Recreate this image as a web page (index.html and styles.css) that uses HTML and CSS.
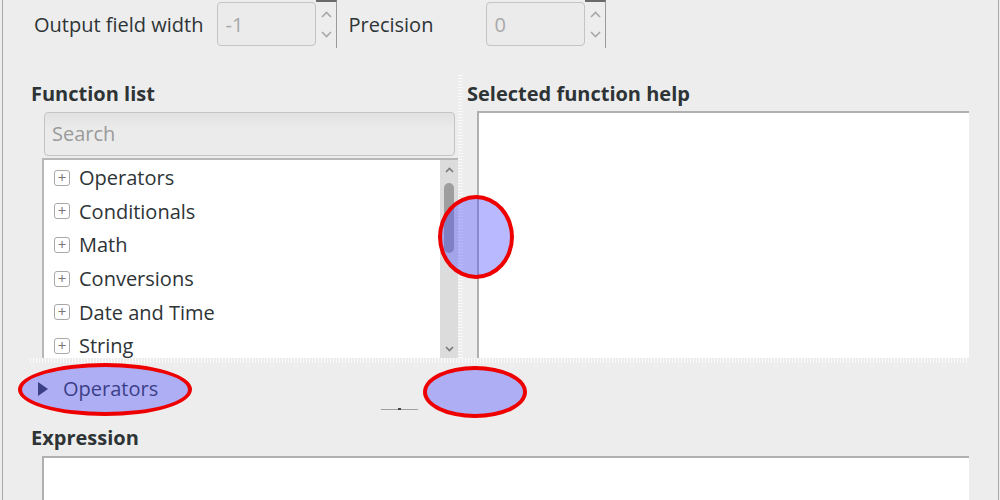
FILE: index.html
```html
<!DOCTYPE html>
<html lang="en">
<head>
    <meta charset="UTF-8">
    <title>Expression editor</title>
    <link rel="stylesheet" href="styles.css">
</head>
<body>
    <div class="window">
        <div class="format-row">
            <span class="label">Output field width</span>
            <div class="spinbox">
                <div class="spin-value">-1</div>
                <div class="spin-buttons">
                    <svg width="11" height="7" viewBox="0 0 11 7"><path d="M1 6 L5.5 1.5 L10 6" fill="none" stroke="#a8a8a8" stroke-width="1.6"/></svg>
                    <svg width="11" height="7" viewBox="0 0 11 7"><path d="M1 1 L5.5 5.5 L10 1" fill="none" stroke="#a8a8a8" stroke-width="1.6"/></svg>
                </div>
            </div>
            <span class="label precision">Precision</span>
            <div class="spinbox">
                <div class="spin-value">0</div>
                <div class="spin-buttons">
                    <svg width="11" height="7" viewBox="0 0 11 7"><path d="M1 6 L5.5 1.5 L10 6" fill="none" stroke="#a8a8a8" stroke-width="1.6"/></svg>
                    <svg width="11" height="7" viewBox="0 0 11 7"><path d="M1 1 L5.5 5.5 L10 1" fill="none" stroke="#a8a8a8" stroke-width="1.6"/></svg>
                </div>
            </div>
        </div>

        <div class="panes">
            <section class="list-pane">
                <h2>Function list</h2>
                <div class="search">Search</div>
                <div class="func-list">
                    <ul>
                        <li><span class="plus">+</span>Operators</li>
                        <li><span class="plus">+</span>Conditionals</li>
                        <li><span class="plus">+</span>Math</li>
                        <li><span class="plus">+</span>Conversions</li>
                        <li><span class="plus">+</span>Date and Time</li>
                        <li><span class="plus">+</span>String</li>
                    </ul>
                    <div class="scrollbar">
                        <svg width="9" height="6" viewBox="0 0 9 6"><path d="M1 5 L4.5 1.5 L8 5" fill="none" stroke="#7a7a7a" stroke-width="1.6"/></svg>
                        <div class="track"><div class="thumb"></div></div>
                        <svg width="9" height="6" viewBox="0 0 9 6"><path d="M1 1 L4.5 4.5 L8 1" fill="none" stroke="#7a7a7a" stroke-width="1.6"/></svg>
                    </div>
                </div>
            </section>
            <div class="vsplit"></div>
            <section class="help-pane">
                <h2>Selected function help</h2>
                <div class="help-box"></div>
            </section>
        </div>
        <div class="hsplit"></div>

        <div class="group-row">
            <span class="expander"><span class="triangle"></span>Operators</span>
            <span class="handle"><i></i></span>
        </div>

        <h2 class="expr-title">Expression</h2>
        <div class="expr-box"></div>

        <div class="mark mark-scroll"></div>
        <div class="mark mark-group"></div>
        <div class="mark mark-handle"></div>
    </div>
</body>
</html>
```

FILE: styles.css
```css
body {
    margin: 0;
    background-color: #ededed;
    font-family: "Open Sans", "Noto Sans", sans-serif;
    color: #2e3436;
    font-size: 20px;
}

.window {
    position: relative;
    height: 500px;
    overflow: hidden;
    border-left: 1px solid #a8a8a8;
    border-right: 1px solid #a8a8a8;
    margin: 0 1px 0 2px;
}

h2 {
    font-size: 20px;
    font-weight: bold;
    margin: 0;
    line-height: 22px;
}

/* top row */
.format-row {
    display: flex;
    align-items: center;
    height: 48px;
    padding-left: 31px;
}

.label {
    margin-right: 14px;
}

.precision {
    margin-left: 11px;
    margin-right: 53px;
}

.spinbox {
    display: flex;
    height: 48px;
    align-items: stretch;
}

.spin-value {
    width: 90px;
    margin: 2px 0 2px 0;
    padding-left: 7px;
    border: 1px solid #c4c4c4;
    border-radius: 4px;
    background-color: #ebebeb;
    color: #a8a8a8;
    display: flex;
    align-items: center;
}

.spin-buttons {
    width: 20px;
    border-top: 2px solid #6a6a6a;
    border-right: 1px solid #9a9a9a;
    display: flex;
    flex-direction: column;
    align-items: center;
    justify-content: space-around;
    padding: 2px 0 4px;
}

/* split panes */
.panes {
    display: flex;
    height: 310px;
}

.list-pane {
    width: 427px;
    padding: 35px 0 0 28px;
    display: flex;
    flex-direction: column;
}

.search {
    margin: 7px 0 0 13px;
    height: 42px;
    line-height: 42px;
    padding-left: 7px;
    border: 1px solid #c4c4c4;
    border-radius: 4px;
    background: linear-gradient(#e2e2e2, #ebebeb 40%);
    color: #9a9a9a;
    width: 402px;
}

.func-list {
    margin: 2px 0 0 11px;
    flex: 1;
    min-height: 0;
    overflow: hidden;
    display: flex;
    background-color: #fff;
    border-top: 2px solid #b8b8b8;
    border-left: 2px solid #b8b8b8;
}

.func-list ul {
    list-style: none;
    margin: 0;
    padding: 1px 0 0 10px;
    flex: 1;
}

.func-list li {
    height: 33.6px;
    display: flex;
    align-items: center;
}

.plus {
    width: 14px;
    height: 14px;
    border: 1px solid #a8a8a8;
    border-radius: 3px;
    font-size: 15px;
    line-height: 13px;
    text-align: center;
    color: #777;
    margin-right: 9px;
}

.scrollbar {
    width: 18px;
    background-color: #dcdcdc;
    display: flex;
    flex-direction: column;
    align-items: center;
    padding: 7px 0 6px;
}

.track {
    flex: 1;
    padding-top: 10px;
}

.thumb {
    width: 10px;
    height: 70px;
    border-radius: 5px;
    background-color: #9e9e9e;
}

.vsplit {
    width: 5px;
    margin: 27px 4px 0 0;
    background-image: repeating-linear-gradient(0deg, #fafafa 0 1px, transparent 1px 3px);
}

.help-pane {
    flex: 1;
    padding-top: 35px;
    margin-right: 29px;
    display: flex;
    flex-direction: column;
}

.help-box {
    flex: 1;
    margin: 6px 0 0 10px;
    background-color: #fff;
    border-top: 2px solid #b0b0b0;
    border-left: 2px solid #b0b0b0;
}

.hsplit {
    height: 5px;
    margin: 0 29px 0 27px;
    background-image: repeating-linear-gradient(90deg, #fafafa 0 1px, transparent 1px 3px);
}

/* group row */
.group-row {
    height: 64px;
    display: flex;
    align-items: flex-start;
    padding-left: 35px;
}

.expander {
    display: flex;
    align-items: center;
    width: 343px;
    margin-top: 12px;
    line-height: 27px;
    color: #2e3436;
}

.triangle {
    width: 0;
    height: 0;
    border-left: 10px solid #2e3436;
    border-top: 7px solid transparent;
    border-bottom: 7px solid transparent;
    margin-right: 15px;
}

.handle {
    margin-top: 46px;
    width: 37px;
    height: 1px;
    background-color: #a0a0a0;
    display: flex;
    justify-content: center;
}

.handle i {
    width: 3px;
    height: 2px;
    margin-top: -1px;
    background-color: #444;
}

.expr-title {
    margin: 0 0 7px 28px;
}

.expr-box {
    margin: 0 29px 0 39px;
    height: 60px;
    background-color: #fff;
    border-top: 2px solid #b0b0b0;
    border-left: 2px solid #b0b0b0;
}

/* annotation marks */
.mark {
    position: absolute;
    border: 4px solid #ee0000;
    border-radius: 50%;
    background-color: rgba(80, 80, 255, 0.4);
    box-sizing: border-box;
}

.mark-scroll {
    left: 435px;
    top: 195px;
    width: 76px;
    height: 84px;
}

.mark-group {
    left: 15px;
    top: 363px;
    width: 174px;
    height: 53px;
}

.mark-handle {
    left: 420px;
    top: 366px;
    width: 104px;
    height: 52px;
}
```
